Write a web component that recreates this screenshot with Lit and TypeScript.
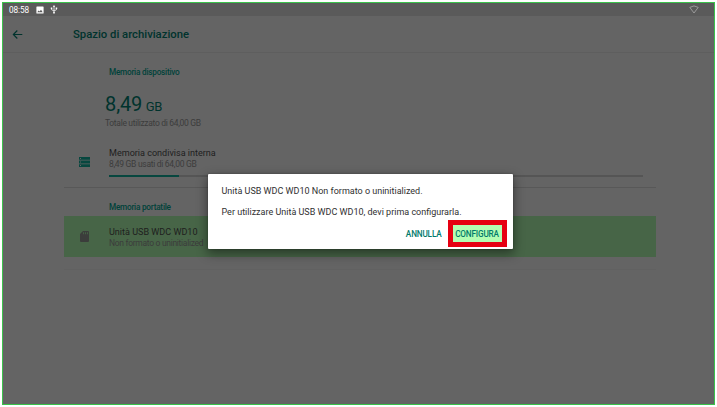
import { LitElement, html, css } from "lit";
import { customElement, property } from "lit/decorators.js";

@customElement("storage-row")
class StorageRow extends LitElement {
  @property() heading = "";
  @property() detail = "";
  @property({ type: Number }) used = 0;

  static styles = css`
    :host { display: flex; box-sizing: border-box; padding-right: 13.5px; }
    .icon { width: 45px; flex: none; display: flex; }
    .body { flex: 1; }
    .heading { font-size: 9.05px; line-height: 12px; color: #1e1e1e; white-space: nowrap; }
    .detail { font-size: 8.5px; letter-spacing: -0.3px; line-height: 11px; color: #3c3c3c; white-space: nowrap; }
    .track { height: 2px; margin-top: 5px; background: #555; }
    .fill { height: 2px; background: #07473f; }
  `;

  render() {
    return html`
      <div class="icon"><slot></slot></div>
      <div class="body">
        <div class="heading">${this.heading}</div>
        <div class="detail">${this.detail}</div>
        ${this.used
          ? html`<div class="track"><div class="fill" style="width:${this.used}%"></div></div>`
          : ""}
      </div>
    `;
  }
}

@customElement("app-root")
class AppRoot extends LitElement {
  static styles = css`
    :host {
      display: block; width: 717px; height: 407px; box-sizing: border-box;
      padding: 2px; background: #fff; overflow: hidden;
      font-family: Roboto, sans-serif; position: relative;
    }
    .screen {
      width: 713px; height: 403px; box-sizing: border-box;
      border: 1px solid #3bc24b; background: #646464; overflow: hidden;
    }
    .status {
      height: 13px; background: #5a5a5a; color: #fff; display: flex; align-items: center;
      padding: 0 15px 0 6px; font-size: 8.2px; font-weight: 400; letter-spacing: -0.05px;
    }
    .clock { width: 21px; padding-top: 1px; white-space: nowrap; }
    .status svg { flex: none; display: block; }
    .picture { margin-left: 6px; }
    .usb { margin-left: 6px; }
    .wifi { margin-left: auto; }
    .bar {
      height: 37px; box-sizing: border-box; display: flex; align-items: center;
      border-bottom: 1px solid #5e5e5e; padding: 0 0 1px 9px; color: #00332d;
    }
    .title { margin-left: 50px; padding-top: 2px; font-size: 11.3px; font-weight: 500; }
    .content { width: 592px; margin-left: 61px; }
    .section { padding-left: 45px; font-size: 8.2px; letter-spacing: -0.22px; font-weight: 500; line-height: 10px; color: #00423a; }
    .first { padding-top: 14px; }
    .total { padding-left: 41px; margin-top: 13px; height: 28px; line-height: 28px; color: #00332d; white-space: nowrap; }
    .amount { font-size: 20px; letter-spacing: -0.1px; }
    .unit { font-size: 13px; letter-spacing: -0.3px; margin-left: -0.5px; }
    .caption { padding-left: 41px; font-size: 8.5px; letter-spacing: -0.32px; line-height: 10px; color: #3c3c3c; }
    .internal { height: 40px; margin-top: 19px; }
    .divider { height: 1px; background: #585858; }
    .second { padding-top: 14px; }
    .portable { margin-top: 4px; height: 41px; padding-top: 10px; background: #476547; }
    .end { height: 1px; margin-top: 12px; background: #616161; }
    .dialog {
      position: absolute; left: 208px; top: 174px; width: 304.5px; height: 74.5px;
      box-sizing: border-box; background: #fff; border-radius: 1px; padding: 11px 6px 0 13.5px;
      box-shadow: 0 4px 11px 1px rgba(0, 0, 0, 0.42), 0 0 2px rgba(0, 0, 0, 0.3);
      color: #303030; font-size: 9px; line-height: 12px; white-space: nowrap;
    }
    .message + .message { margin-top: 9px; }
    .actions { display: flex; justify-content: flex-end; align-items: center; margin-top: 2px; color: #00796b; font-size: 8.2px; letter-spacing: -0.16px; font-weight: 500; }
    .configure {
      width: 59px; height: 27px; box-sizing: border-box; border: 5px solid #e60012;
      background: #b3fdb3; display: flex; align-items: center; justify-content: center; margin-left: 6px;
    }
  `;

  render() {
    return html`
      <div class="screen">
        <div class="status">
          <span class="clock">08:58</span>
          <svg class="picture" width="8" height="8" viewBox="0 0 8 8">
            <path fill="#fff" fill-rule="evenodd" d="M1 .5h6q.6 0 .6.6v5.8q0 .6-.6.6H1q-.6 0-.6-.6V1.1Q.4.5 1 .5ZM1.3 6.2h5.4L5 3.8 3.6 5.5l-1-1.1Z" />
          </svg>
          <svg class="usb" width="8" height="9" viewBox="0 0 8 9" fill="none" stroke="#fff" stroke-width=".8">
            <path d="M4 1v6.5M1.5 3.2v1.4L4 6l2.5-1.4V3.2" />
            <path fill="#fff" stroke="none" d="M4 0 5.2 1.8H2.8ZM.8 2.4h1.5v1.5H.8ZM5.7 2.4h1.5v1.5H5.7ZM3.2 7h1.6v1.6H3.2Z" />
          </svg>
          <svg class="wifi" width="10" height="9" viewBox="0 0 10 9" fill="none" stroke="#a0a0a0" stroke-width=".9">
            <path d="M.8 2.4Q5-.6 9.2 2.4L5 8Z" />
          </svg>
        </div>
        <div class="bar">
          <svg width="11" height="10" viewBox="0 0 11 10" fill="none" stroke="currentColor" stroke-width="1.1">
            <path d="M10.3 5.5H1.5M5.3 1.5l-4 4 4 4" />
          </svg>
          <div class="title">Spazio di archiviazione</div>
        </div>
        <div class="content">
          <div class="section first">Memoria dispositivo</div>
          <div class="total"><span class="amount">8,49</span> <span class="unit">GB</span></div>
          <div class="caption">Totale utilizzato di 64,00 GB</div>
          <storage-row class="internal" heading="Memoria condivisa interna" detail="8,49 GB usati di 64,00 GB" .used=${13.1}>
            <svg width="26" height="24" viewBox="0 0 26 24">
              <path fill="#07473f" fill-rule="evenodd" d="M15 10h11v2.8H15ZM15 13.6h11v2.8H15ZM15 17.2h11V20H15ZM16 10.9v1h1v-1ZM16 14.5v1h1v-1ZM16 18.1v1h1v-1Z" />
            </svg>
          </storage-row>
          <div class="divider"></div>
          <div class="section second">Memoria portatile</div>
          <storage-row class="portable" heading="Unità USB WDC WD10" detail="Non formato o uninitialized">
            <svg width="26" height="24" viewBox="0 0 26 24">
              <path fill="#3b3d3b" fill-rule="evenodd" d="M19 5h5q1 0 1 1v9q0 1-1 1h-7q-1 0-1-1V8ZM19 6.2v2h.9v-2ZM21 6.2v2h.9v-2ZM23 6.2v2h.9v-2Z" />
            </svg>
          </storage-row>
          <div class="end"></div>
        </div>
      </div>
      <div class="dialog">
        <div class="message">Unità USB WDC WD10 Non formato o uninitialized.</div>
        <div class="message">Per utilizzare Unità USB WDC WD10, devi prima configurarla.</div>
        <div class="actions"><span>ANNULLA</span><span class="configure">CONFIGURA</span></div>
      </div>
    `;
  }
}
